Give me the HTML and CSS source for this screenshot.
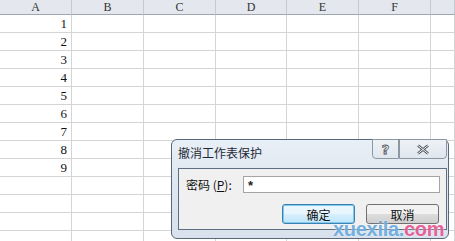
FILE: index.html
```html
<!DOCTYPE html>
<html lang="zh-CN">
<head>
    <meta charset="UTF-8" />
    <link rel="stylesheet" href="styles.css">
</head>
<body>
    <div class="sheet">
        <div class="col-head">A</div>
        <div class="col-head">B</div>
        <div class="col-head">C</div>
        <div class="col-head">D</div>
        <div class="col-head">E</div>
        <div class="col-head">F</div>
        <div class="col-head"></div>
    </div>

    <div class="dialog">
        <div class="dialog-title">
            <span>撤消工作表保护</span>
            <div class="title-buttons">
                <button class="tb-help">?</button>
                <button class="tb-close">
                    <svg width="14" height="11" viewBox="0 0 14 11">
                        <path d="M2 1.5 L12 9.5 M12 1.5 L2 9.5" stroke="#4a4f57" stroke-width="2.6" fill="none"/>
                        <path d="M2 1.5 L12 9.5 M12 1.5 L2 9.5" stroke="#f4f6f8" stroke-width="1" fill="none"/>
                    </svg>
                </button>
            </div>
        </div>
        <div class="dialog-body">
            <div class="pwd-row">
                <label>密码 (<u>P</u>):</label>
                <div class="pwd-input">*</div>
            </div>
            <div class="btn-row">
                <button class="btn btn-default">确定</button>
                <button class="btn">取消</button>
            </div>
        </div>
    </div>

    <div class="watermark">xuexila.<span>com</span></div>

    <script>
        const sheet = document.querySelector('.sheet');
        for (let r = 1; r <= 13; r++) {
            for (let c = 0; c < 7; c++) {
                const cell = document.createElement('div');
                cell.className = 'cell';
                if (c === 0 && r <= 9) cell.textContent = r;
                sheet.appendChild(cell);
            }
        }
    </script>
</body>
</html>
```

FILE: styles.css
```css
* {
    box-sizing: border-box;
    margin: 0;
    padding: 0;
}

body {
    width: 455px;
    height: 241px;
    overflow: hidden;
    background: #fff;
    font-family: 'Liberation Serif', 'Noto Sans CJK SC', serif;
    color: #222;
    position: relative;
}

.sheet {
    display: grid;
    grid-template-columns: 72px 72px 72px 71px 72px 72px 1fr;
    grid-template-rows: 15px;
    grid-auto-rows: 18px;
}

.col-head {
    background: #e4e8ee;
    border-right: 1px solid #c5cad2;
    border-bottom: 1px solid #9ea6b1;
    font-size: 12px;
    line-height: 14px;
    text-align: center;
    color: #333;
}

.cell {
    border-right: 1px solid #d4d4d4;
    border-bottom: 1px solid #d4d4d4;
    font-size: 13px;
    line-height: 17px;
    text-align: right;
    padding-right: 4px;
    color: #111;
}

.dialog {
    position: absolute;
    left: 171px;
    top: 139px;
    width: 278px;
    height: 100px;
    background: linear-gradient(#e9eff6, #dfe7f0 40%, #d8e1ec);
    border: 1px solid #58677a;
    border-radius: 6px;
    padding: 0 1px 8px 6px;
    display: flex;
    flex-direction: column;
    font-family: 'Noto Sans CJK SC', sans-serif;
}

.dialog-title {
    height: 28px;
    display: flex;
    justify-content: space-between;
    align-items: flex-start;
    font-size: 12px;
    color: #1e2a36;
}

.dialog-title span {
    padding-top: 5px;
    line-height: 16px;
}

.title-buttons {
    display: flex;
    margin-top: -1px;
}

.title-buttons button {
    height: 20px;
    border: 1px solid #8d97a4;
    background: linear-gradient(#eef2f6, #dfe6ee);
    display: flex;
    align-items: center;
    justify-content: center;
}

.tb-help {
    width: 27px;
    border-right: none;
    border-radius: 0 0 0 4px;
    font-family: 'DejaVu Sans', sans-serif;
    font-weight: bold;
    font-size: 13px;
    color: #f4f6f8;
    -webkit-text-stroke: 0.8px #4a4f57;
}

.tb-close {
    width: 48px;
    border-radius: 0 0 4px 0;
}

.dialog-body {
    flex: 1;
    background: #f0f0f0;
    border: 1px solid #5f6f82;
    padding: 6px 6px 0 7px;
    font-size: 12px;
}

.pwd-row {
    display: flex;
    align-items: center;
    height: 18px;
}

.pwd-row label {
    width: 57px;
    color: #111;
}

.pwd-row u {
    text-underline-offset: 1px;
}

.pwd-input {
    width: 197px;
    height: 17px;
    background: #fff;
    border: 1px solid #a4a4a4;
    padding-left: 4px;
    font-family: 'Liberation Sans', sans-serif;
    font-weight: bold;
    font-size: 13px;
    line-height: 17px;
}

.btn-row {
    display: flex;
    gap: 11px;
    margin-top: 11px;
    padding-left: 96px;
}

.btn {
    width: 73px;
    height: 20px;
    border: 1px solid #707070;
    border-radius: 3px;
    background: linear-gradient(#f2f2f2 50%, #dddddd 50%, #cfcfcf);
    font-family: 'Noto Sans CJK SC', sans-serif;
    font-size: 12px;
    line-height: 17px;
    color: #111;
}

.btn-default {
    border-color: #3c7fb1;
    box-shadow: inset 0 0 0 1px #7ecbed;
    background: linear-gradient(#eaf6fd 50%, #d9f0fc 50%, #bee6fd);
}

.watermark {
    position: absolute;
    left: 333px;
    top: 219px;
    font-family: 'Liberation Sans', sans-serif;
    font-weight: bold;
    font-size: 20px;
    line-height: 20px;
    letter-spacing: -0.3px;
    color: rgba(80, 155, 215, 0.8);
    text-shadow: 0 0 2px rgba(255, 255, 255, 0.9);
}

.watermark span {
    color: rgba(228, 70, 135, 0.85);
}
```
